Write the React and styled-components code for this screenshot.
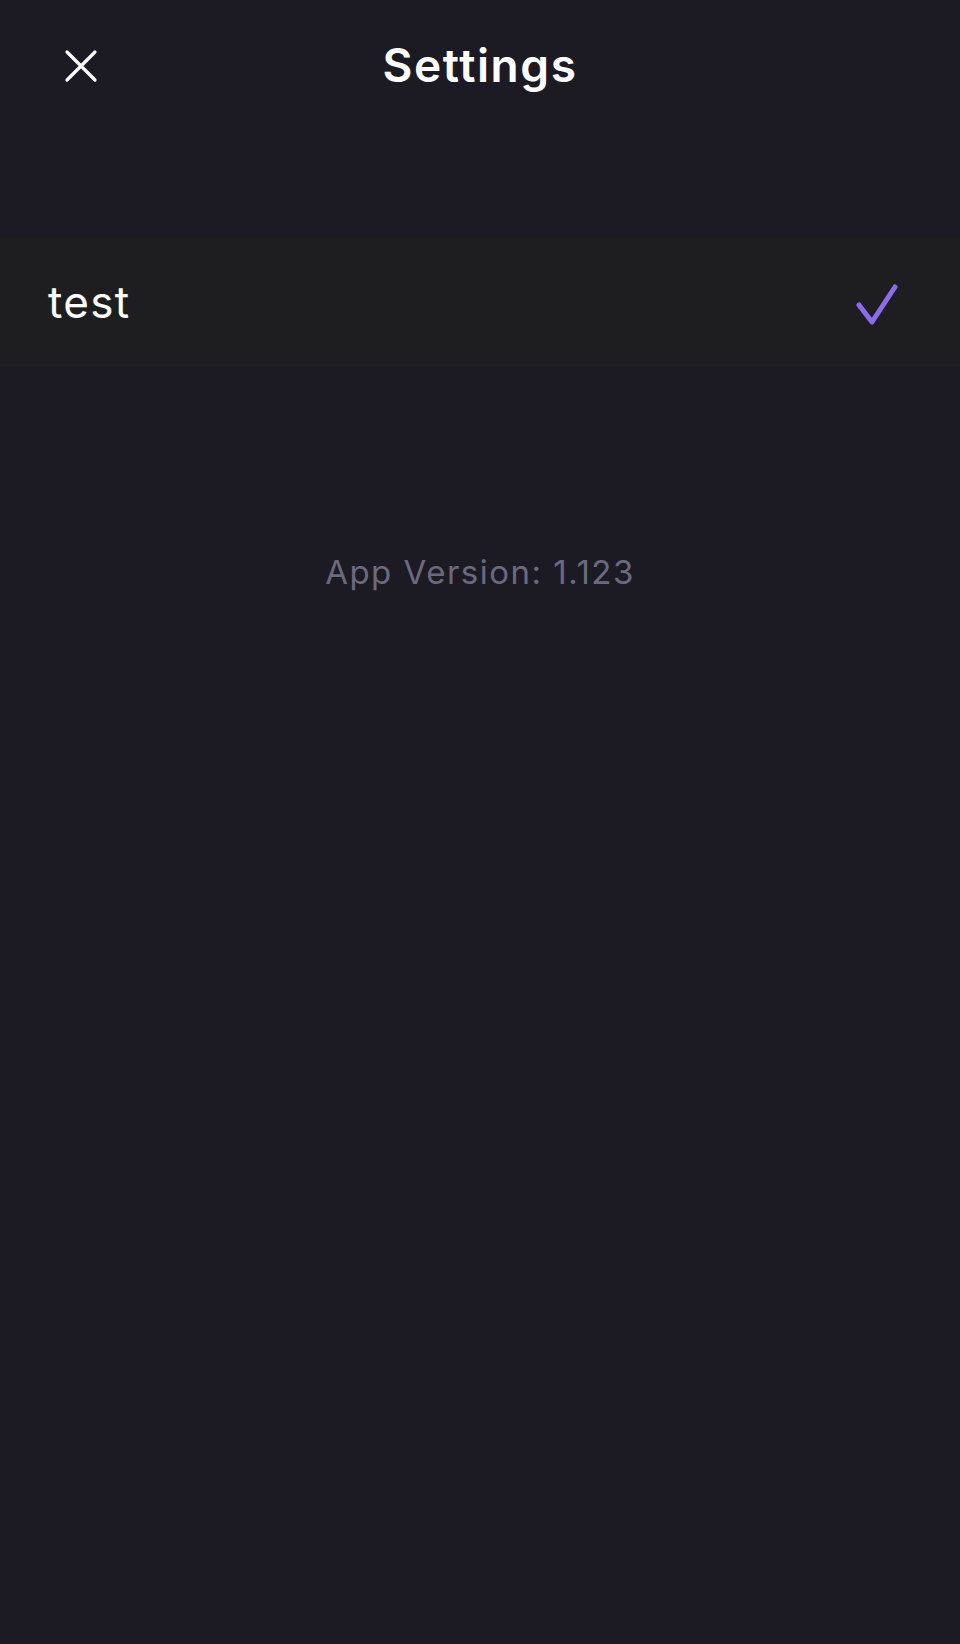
import React from "react";
import styled, { createGlobalStyle } from "styled-components";

const Global = createGlobalStyle`
  html, body { margin: 0; padding: 0; background: #1c1b24; }
  body { font-family: Inter, "Noto Sans", sans-serif; -webkit-font-smoothing: antialiased; }
`;

const Page = styled.div`
  min-height: 1644px;
  background: #1c1b24;
  display: flex;
  flex-direction: column;
`;

const Header = styled.header`
  height: 132px;
  display: grid;
  grid-template-columns: 130px 1fr 130px;
  align-items: center;
`;

const CloseButton = styled.button`
  background: none;
  border: 0;
  padding: 0;
  margin-left: 62px;
  width: 38px;
  height: 38px;
  display: flex;
  align-items: center;
  justify-content: center;
  cursor: pointer;
`;

const Title = styled.h1`
  margin: 0;
  text-align: center;
  color: #ffffff;
  font-size: 46px;
  font-weight: 600;
  letter-spacing: 1.6px;
  line-height: 1;
  transform: translateY(-1px);
`;

const List = styled.div`
  margin-top: 105px;
  display: flex;
  flex-direction: column;
`;

const Row = styled.div`
  height: 130px;
  background: #1e1e20;
  display: flex;
  align-items: center;
  justify-content: space-between;
  padding: 0 58px 0 48px;
`;

const RowLabel = styled.span`
  color: #ffffff;
  font-size: 44px;
  font-weight: 400;
  letter-spacing: 1.3px;
  line-height: 1;
`;

const Version = styled.p`
  margin: 185px 0 0;
  text-align: center;
  color: #6c697e;
  font-size: 33px;
  line-height: 40px;
  letter-spacing: 1.5px;
`;

const CloseIcon = () => (
  <svg width="38" height="38" viewBox="0 0 38 38" fill="none">
    <path d="M5 5 L33 33 M33 5 L5 33" stroke="#ffffff" strokeWidth="3.2" strokeLinecap="round" />
  </svg>
);

const CheckIcon = () => (
  <svg width="48" height="48" viewBox="0 0 48 48" fill="none">
    <path d="M5 27 L18 44 L41 9" stroke="#8b6cf0" strokeWidth="5" strokeLinecap="round" strokeLinejoin="round" />
  </svg>
);

export default function App() {
  return (
    <>
      <Global />
      <Page>
        <Header>
          <CloseButton aria-label="Close"><CloseIcon /></CloseButton>
          <Title>Settings</Title>
          <div />
        </Header>
        <List>
          <Row>
            <RowLabel>test</RowLabel>
            <CheckIcon />
          </Row>
        </List>
        <Version>App Version: 1.123</Version>
      </Page>
    </>
  );
}
